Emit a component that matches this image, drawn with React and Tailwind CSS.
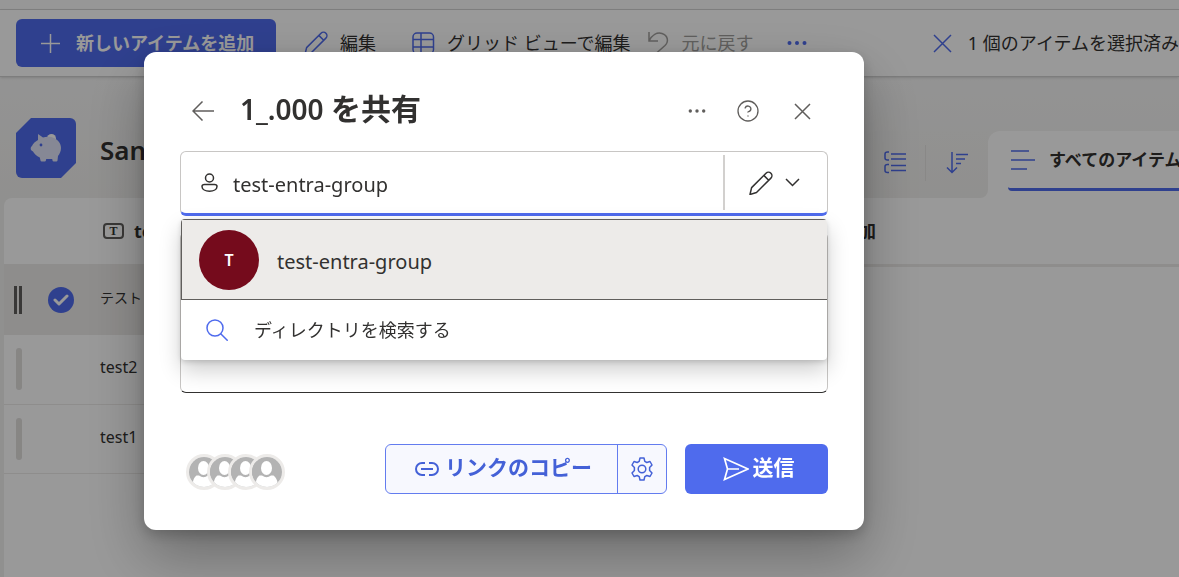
import React, { useState } from 'react';
import { CircleHelp } from 'lucide-react';

function Icon({ children, className = '', w = 24, h = 24 }) {
  return (
    <svg
      width={w}
      height={h}
      viewBox={`0 0 ${w} ${h}`}
      fill="none"
      stroke="currentColor"
      strokeWidth="1.5"
      className={`shrink-0 ${className}`}
      aria-hidden="true"
    >
      {children}
    </svg>
  );
}

const PencilIcon = ({ className }) => (
  <Icon className={className}>
    <path d="M1 23.5 2.6 16.6 17 2.2a3.4 3.4 0 0 1 4.9 4.9L7.5 21.5ZM14.8 4.4l4.9 4.9" strokeLinejoin="round" />
  </Icon>
);

const CrossIcon = ({ size, className }) => (
  <Icon w={size} h={size} className={className}>
    <path d={`M1 1 ${size - 1} ${size - 1}M${size - 1} 1 1 ${size - 1}`} />
  </Icon>
);

const DotsIcon = ({ r, gap, className }) => (
  <Icon w={22} h={6} className={className}>
    <g fill="currentColor" stroke="none">
      <circle cx={11 - gap} cy="3" r={r} />
      <circle cx="11" cy="3" r={r} />
      <circle cx={11 + gap} cy="3" r={r} />
    </g>
  </Icon>
);

const PiggyIcon = () => (
  <svg width="32" height="30" viewBox="0 0 32 30" aria-hidden="true">
    <circle cx="21.5" cy="5.5" r="4.5" fill="#fff" />
    <path
      fill="#dfe3f8"
      d="M8 1 13 4.500c3-1 8-1 11 .5 4 1.800 7 5.500 7 10 0 3.500-1.500 6-3 8l-.5 4.500q-.2 1-1.200 1h-2.600q-1 0-1.200-1l-.3-1.500h-6l-.3 1.500q-.2 1-1.200 1h-3q-1 0-1.200-1l-.7-3C6.500 23 4 20.500 3 18.500L1.500 17.500q-.8-.7-.8-2c0-1.500.5-2 1.300-2.600C3 10.500 5.500 8.500 8 7Z"
    />
    <circle cx="11" cy="12" r="1.400" fill="#4f6bed" />
  </svg>
);

const rows = [
  { name: 'テスト', selected: true },
  { name: 'test2' },
  { name: 'test1' },
];

const cmd = 'flex items-center text-lg whitespace-nowrap';

function CommandBar() {
  return (
    <div className="relative flex h-[67px] items-start border-b border-[#d0d0d0] bg-white pt-[9px] pl-4 shadow-sm">
      <button className="flex h-12 w-[260px] shrink-0 items-center gap-4 rounded-md bg-[#4f6bed] pl-[25px] text-lg font-bold whitespace-nowrap text-white">
        <Icon w={19} h={19}><path d="M9.5 0v19M0 9.5h19" /></Icon>
        新しいアイテムを追加
      </button>
      <div className="flex h-12 flex-1 items-center">
        <button className={`${cmd} ml-7 gap-3`}>
          <PencilIcon className="text-[#4f6bed]" />
          編集
        </button>
        <button className={`${cmd} ml-9 gap-3`}>
          <Icon w={23} h={23} className="text-[#4f6bed]">
            <rect x="1" y="1" width="20.5" height="20.5" rx="4" />
            <path d="M9 1v20.5M1 7.5h20.5M1 15h20.5" />
          </Icon>
          グリッド ビューで編集
        </button>
        <button className={`${cmd} ml-4 gap-3 text-[#a19f9d]`} disabled>
          <Icon w={23} h={24}>
            <path d="M2 1v9h9M2 10C5 4 10 1 15 2.5c6 2 7 8 3 12L9 22.5" />
          </Icon>
          元に戻す
        </button>
        <button aria-label="その他" className="ml-8 text-[#4f6bed]">
          <DotsIcon r={2} gap={7.5} />
        </button>
        <button className={`${cmd} ml-auto gap-4`}>
          <CrossIcon size={19} className="text-[#4f6bed]" />
          1 個のアイテムを選択済み
        </button>
      </div>
    </div>
  );
}

function ListHeader() {
  return (
    <div className="flex h-[121px] items-end justify-between bg-linear-to-b from-[#f6f6f6] to-[#f1f0ee]">
      <div className="flex items-center gap-6 self-start pt-[41px] pl-4">
        <div className="grid h-[60px] w-[60px] place-items-center rounded-md bg-[#4f6bed] [clip-path:polygon(25%_0,100%_0,100%_75%,75%_100%,0_100%,0_25%)]">
          <PiggyIcon />
        </div>
        <h1 className="pt-1 text-[26px] font-semibold">San</h1>
      </div>
      <div className="flex h-[67px] shrink-0">
        <div className="flex items-end bg-linear-to-b from-transparent from-80% to-white to-80%">
          <div className="flex h-full items-center rounded-br-lg bg-linear-to-b from-[#f3f3f2] to-[#f1f0ee] pr-5 pb-1 text-[#4f6bed]">
            <button aria-label="グループ化" className="pr-[18px] pl-5">
              <Icon w={23} h={23}>
                <path d="M5 1H3.5Q1 1 1 3v4q0 2 2.500 2H5M5 13.500H3.500Q1 13.500 1 15.500v4q0 2 2.500 2H5M7 3h15M7 8h15M7 14.500h15M7 19.500h15" />
              </Icon>
            </button>
            <span className="h-9 w-px bg-[#e5e3e1]" />
            <button aria-label="並べ替え" className="pl-5">
              <Icon w={22} h={22}>
                <path d="M6 0v20.500M1 15.500l5 5 5-5M10 2.500h12M10 7h9M10 11.500h5" />
              </Icon>
            </button>
          </div>
        </div>
        <div className="rounded-tl-xl bg-white pl-5">
          <button className="flex h-[60px] w-[171px] items-center gap-[14px] rounded-bl-sm border-b-[3px] border-[#4f6bed] text-[17px] font-bold whitespace-nowrap">
            <Icon w={27} h={22} className="text-[#4f6bed]"><path d="M3 2h18M3 11h24M3 20h16" /></Icon>
            すべてのアイテム
          </button>
        </div>
      </div>
    </div>
  );
}

function ItemTable() {
  return (
    <div className="bg-[#f1f0ee] pl-1">
      <div className="min-h-[379px] rounded-tl-lg bg-white">
        <div className="h-[69px] border-b-[3px] border-[#edebe9]">
          <table className="w-[872px] table-fixed text-base">
            <thead>
              <tr className="h-[66px] text-left">
                <th className="w-24" />
                <th>
                  <span className="flex items-center gap-[10px] pl-[3px] text-lg">
                    <span className="grid h-4 w-[21px] place-items-center rounded-sm border-2 border-[#605e5c] font-['Liberation_Serif'] text-xs leading-none">T</span>
                    te
                  </span>
                </th>
                <th className="text-right text-lg">列の追加</th>
              </tr>
            </thead>
            <tbody>
              {rows.map((row) => (
                <tr key={row.name} className={row.selected ? 'h-[71px]' : 'h-[69px]'}>
                  <td className={row.selected ? 'bg-[#edebe9]' : 'border-b border-[#edebe9]'}>
                    <div className="flex items-center">
                      {row.selected ? (
                        <>
                          <span className="ml-[10px] flex gap-[2px]">
                            <i className="h-7 w-[3px] bg-[#605e5c]" />
                            <i className="h-7 w-[3px] bg-[#605e5c]" />
                          </span>
                          <label className="ml-[26px] grid h-[26px] w-[26px] place-items-center rounded-full bg-[#4f6bed] text-white">
                            <input type="checkbox" defaultChecked aria-label={row.name} className="sr-only" />
                            <Icon w={16} h={12}><path d="M2 6l4 4 8-8" strokeWidth="3" strokeLinecap="round" strokeLinejoin="round" /></Icon>
                          </label>
                        </>
                      ) : (
                        <i className="ml-3 h-[42px] w-[6px] rounded-full bg-[#e1dfdd]" />
                      )}
                    </div>
                  </td>
                  <td className={row.selected ? 'bg-[#edebe9] pb-1 text-sm' : 'border-b border-[#edebe9] pb-1'}>{row.name}</td>
                </tr>
              ))}
            </tbody>
          </table>
        </div>
      </div>
    </div>
  );
}

function Avatar() {
  return (
    <span className="-ml-[15px] rounded-full border-[3px] border-[#edebe9] first:ml-0">
      <svg width="30" height="30" viewBox="0 0 30 30" className="rounded-full bg-[#b3b3b3]" aria-hidden="true">
        <ellipse cx="14.5" cy="11" rx="5.500" ry="7" fill="#fff" />
        <path d="M4 30v-4q0-5 3.500-7.500h2.500q4.500 3.500 9 0h2.500q3.500 2.500 4 7.500v4Z" fill="#fff" />
      </svg>
    </span>
  );
}

function ShareDialog() {
  const [people, setPeople] = useState('test-entra-group');
  return (
    <div
      role="dialog"
      aria-label="共有"
      className="w-[720px] rounded-xl bg-white px-9 pt-[35px] pb-9 text-[#323130] shadow-[0_26px_58px_rgba(0,0,0,0.3),0_5px_14px_rgba(0,0,0,0.2)]"
    >
      <div className="flex h-12 items-center pl-3">
        <button aria-label="戻る" className="text-[#605e5c]">
          <Icon w={22} h={20}><path d="M22 10H1M10.5.5 1 10l9.500 9.500" /></Icon>
        </button>
        <h2 className="ml-[26px] pb-1 text-3xl font-bold">
          <span className="text-[28px] font-semibold">1_.000 </span>を共有
        </h2>
        <div className="ml-auto flex items-center pr-[17px] text-[#605e5c]">
          <button aria-label="その他のオプション"><DotsIcon r={1.7} gap={6.7} /></button>
          <button aria-label="ヘルプ" className="ml-7"><CircleHelp size={24} strokeWidth={1.3} /></button>
          <button aria-label="閉じる" className="ml-[34px]"><CrossIcon size={17} /></button>
        </div>
      </div>

      <div className="relative mt-4">
        <div className="flex h-[65px] items-center rounded-md border border-b-[3px] border-[#c8c6c4] border-b-[#4f6bed] pl-5">
          <Icon w={17} h={19}>
            <circle cx="8.5" cy="5" r="4" />
            <path d="M3.5 11.500h10q2.500 0 2.500 2c0 3-3.500 4.700-7.500 4.700S1 16.500 1 13.500q0-2 2.500-2Z" />
          </Icon>
          <input
            aria-label="名前、グループ、またはメール"
            value={people}
            onChange={(e) => setPeople(e.target.value)}
            className="ml-[15px] min-w-0 flex-1 pt-1 text-xl outline-none"
          />
          <span className="h-[55px] w-[2px] bg-[#d2d0ce]" />
          <button aria-label="編集可能" className="flex w-[102px] items-center gap-3 pl-6">
            <PencilIcon />
            <Icon w={15} h={9}><path d="m1 1 6.500 6.500L14 1" /></Icon>
          </button>
        </div>
        <ul
          role="listbox"
          aria-label="候補"
          className="absolute inset-x-px top-[68px] overflow-hidden rounded-sm bg-white shadow-[0_10px_22px_rgba(0,0,0,0.2),0_2px_5px_rgba(0,0,0,0.15)]"
        >
          <li>
            <button className="flex h-[81px] w-full items-center gap-[18px] border border-r-0 border-[#605e5c] bg-[#edebe9] pl-[17px] text-xl">
              <span className="grid h-[60px] w-[60px] place-items-center rounded-full bg-[#750b1c] text-base font-semibold text-white">T</span>
              <span className="pt-1">test-entra-group</span>
            </button>
          </li>
          <li>
            <button className="flex h-[60px] w-full items-center gap-[26px] pl-[25px] text-lg">
              <Icon w={22} h={22} className="text-[#4f6bed]"><circle cx="9" cy="9" r="8" /><path d="m14.7 14.700 7 7" /></Icon>
              ディレクトリを検索する
            </button>
          </li>
        </ul>
        <textarea
          aria-label="メッセージ"
          className="mt-4 block h-[161px] w-full resize-none rounded-md border border-[#c8c6c4] border-b-[#323130]"
        />
      </div>

      <div className="mt-[51px] flex items-center">
        <div className="flex pt-[6px] pl-[6px]">
          <Avatar /><Avatar /><Avatar /><Avatar />
        </div>
        <div className="ml-auto flex h-[50px] w-[282px] rounded-md border border-[#637cef] bg-[#f7f8fe] text-[#4461d7]">
          <button className="flex flex-1 items-center justify-center gap-[6px] border-r border-[#637cef] pl-1 text-[21px] font-bold">
            <Icon w={24} h={14} className="[stroke-width:2]">
              <path d="M10 1H7a6 6 0 0 0 0 12h3M14 1h3a6 6 0 0 1 0 12h-3M6 7h12" />
            </Icon>
            <span className="pb-[2px]">リンクのコピー</span>
          </button>
          <button aria-label="リンクの設定" className="grid w-12 place-items-center">
            <Icon w={24} h={24}>
              <path d="M10 1h4l.8 3.400 2 1.100L20 4.500l2 3.500-2.400 2.500v3L22 16l-2 3.500-3.200-1-2 1.100L14 23h-4l-.8-3.400-2-1.100-3.200 1L2 16l2.400-2.500v-3L2 8l2-3.500 3.200 1 2-1.100Z" strokeLinejoin="round" />
              <circle cx="12" cy="12" r="3.800" />
            </Icon>
          </button>
        </div>
        <button className="ml-[18px] flex h-[50px] w-[143px] items-center justify-center gap-1 rounded-md bg-[#4f6bed] pl-1 text-[21px] font-bold text-white">
          <Icon w={26} h={24}><path d="M1.5 1.500 25 12 1.500 22.500 4.500 12ZM4.500 12H16" strokeWidth="1.700" /></Icon>
          <span className="pb-[2px]">送信</span>
        </button>
      </div>
    </div>
  );
}

export default function App() {
  return (
    <div className="min-h-screen overflow-hidden bg-white font-['Noto_Sans','Noto_Sans_CJK_JP',sans-serif] text-[#323130]">
      <div className="h-[10px] border-b border-[#d6d6d6] bg-[#fcfcfc]" />
      <CommandBar />
      <ListHeader />
      <ItemTable />
      <div className="fixed inset-0 flex items-start bg-black/40 pt-[52px] pl-36">
        <ShareDialog />
      </div>
    </div>
  );
}
